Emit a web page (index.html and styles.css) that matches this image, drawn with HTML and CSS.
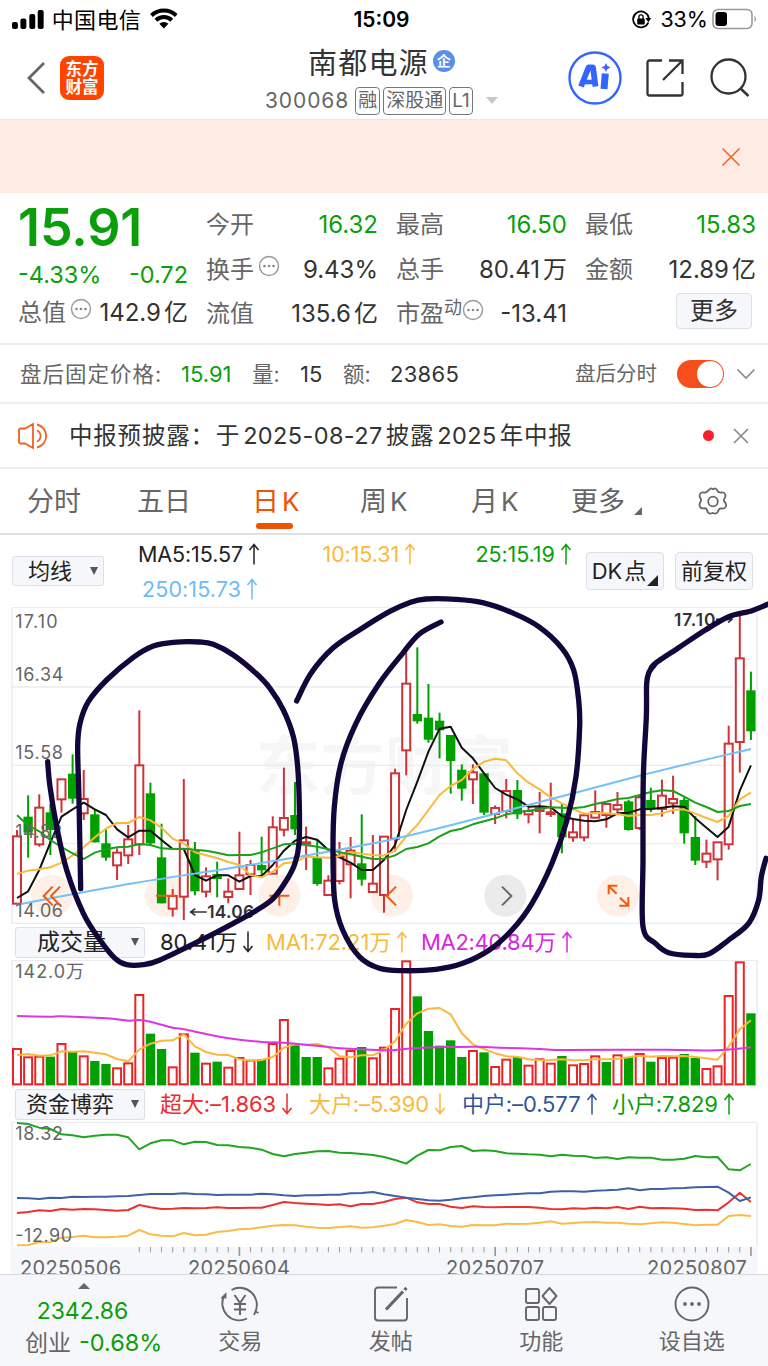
FILE: index.html
```html
<!DOCTYPE html>
<html lang="zh-CN">
<head>
    <meta charset="utf-8">
    <title>南都电源 300068</title>
    <link rel="stylesheet" href="styles.css">
</head>
<body>
    <svg class="defs">
        <symbol id="up" viewBox="0 0 12 22"><path d="M6 21.500V1.500M1.500 7L6 1.500l4.500 5.500" fill="none" stroke="currentColor" stroke-width="1.500"/></symbol>
        <symbol id="down" viewBox="0 0 12 22"><path d="M6 .5v20M1.500 15L6 20.500l4.500-5.500" fill="none" stroke="currentColor" stroke-width="1.500"/></symbol>
        <symbol id="dots" viewBox="0 0 22 22"><circle cx="11" cy="11" r="9.500" fill="none" stroke="#999" stroke-width="1.400"/><g fill="#888"><circle cx="6.500" cy="11" r="1.300"/><circle cx="11" cy="11" r="1.300"/><circle cx="15.500" cy="11" r="1.300"/></g></symbol>
    </svg>

    <div class="status">
        <svg class="signal" width="34" height="22" viewBox="0 0 34 22">
            <rect x="1" y="13" width="6" height="7" rx="2"/><rect x="9.500" y="9.500" width="6" height="10.500" rx="2"/><rect x="18.500" y="5" width="6" height="15" rx="2"/><rect x="27" y="1" width="6" height="19" rx="2"/>
        </svg>
        <span class="carrier">中国电信</span>
        <svg class="wifi" width="28" height="21" viewBox="0 0 28 21">
            <path d="M1.500 7.500a18 18 0 0 1 25 0M6 12.300a11.500 11.500 0 0 1 16 0" fill="none" stroke="#000" stroke-width="4"/>
            <path d="M14 20.500l-4.600-4.600a6.500 6.500 0 0 1 9.200 0z"/>
        </svg>
        <span class="time">15:09</span>
        <svg class="lock" width="22" height="20" viewBox="0 0 22 20">
            <path d="M17.500 12.500A8 8 0 1 1 18 8" fill="none" stroke="#000" stroke-width="1.800"/>
            <path d="M14.500 8h6l-3 4.200z"/><rect x="6.300" y="8.500" width="7.600" height="6" rx="1"/>
            <path d="M8 9V7a2.100 2.100 0 0 1 4.200 0v2" fill="none" stroke="#000" stroke-width="1.300"/>
        </svg>
        <span class="percent">33%</span>
        <svg class="battery" width="46" height="22" viewBox="0 0 46 22">
            <rect x="1" y="1.500" width="39" height="19" rx="5" fill="none" stroke="#999" stroke-width="1.600"/>
            <rect x="3.500" y="4" width="11.500" height="14" rx="3"/><path d="M42.500 7.500q3 3.500 0 7z" fill="#999"/>
        </svg>
    </div>

    <div class="header">
        <svg class="back" width="20" height="34" viewBox="0 0 20 34"><path d="M18 2L3 17l15 15" fill="none" stroke="#666" stroke-width="2.800"/></svg>
        <div class="logo">东方<br>财富</div>
        <div class="name">
            <div class="title">南都电源<i>企</i></div>
            <div class="code">300068<b>融</b><b>深股通</b><b>L1</b><em></em></div>
        </div>
        <svg class="ai" width="54" height="54" viewBox="0 0 54 54">
            <circle cx="27" cy="27" r="25.500" fill="none" stroke="#3366ff" stroke-width="2.400"/>
            <path d="M13 35.500L20.500 16.500h4.500L27.500 35.500" fill="none" stroke="#3366ff" stroke-width="5.800" stroke-linejoin="round"/>
            <path d="M15 31h12" stroke="#3366ff" stroke-width="4.600"/>
            <path d="M37.300 22.500L36 38" stroke="#3366ff" stroke-width="7"/><path d="M38 12l1.400 3 3.200 1.500-3.200 1.400-1.400 3-1.400-3-3.200-1.400 3.200-1.500z" fill="#3366ff"/>
        </svg>
        <svg class="share" width="40" height="40" viewBox="0 0 40 40">
            <path d="M17 2.500H4.500a2 2 0 0 0-2 2v31a2 2 0 0 0 2 2h31a2 2 0 0 0 2-2V24M24 2.500h13.500V16M37 3L18 22" fill="none" stroke="#333" stroke-width="2.300"/>
        </svg>
        <svg class="search" width="42" height="42" viewBox="0 0 42 42">
            <circle cx="19.500" cy="19.500" r="17" fill="none" stroke="#333" stroke-width="2.300"/><path d="M31 31l8.500 8" stroke="#333" stroke-width="2.500"/>
        </svg>
    </div>

    <div class="banner">
        <svg width="20" height="20" viewBox="0 0 20 20"><path d="M1.500 1.500l17 17M18.500 1.500l-17 17" stroke="#f0621e" stroke-width="1.500"/></svg>
    </div>

    <div class="quote">
        <div class="main">
            <div class="price">15.91</div>
            <div class="change"><span>-4.33%</span><span>-0.72</span></div>
            <div class="cell"><label>总值<svg><use href="#dots"/></svg></label><span>142.9<u>亿</u></span></div>
        </div>
        <div class="col">
            <div class="cell"><label>今开</label><span class="green">16.32</span></div>
            <div class="cell"><label>换手<svg><use href="#dots"/></svg></label><span>9.43%</span></div>
            <div class="cell"><label>流值</label><span>135.6<u>亿</u></span></div>
        </div>
        <div class="col">
            <div class="cell"><label>最高</label><span class="green">16.50</span></div>
            <div class="cell"><label>总手</label><span>80.41<u>万</u></span></div>
            <div class="cell"><label>市盈<small>动</small><svg><use href="#dots"/></svg></label><span>-13.41</span></div>
        </div>
        <div class="col">
            <div class="cell"><label>最低</label><span class="green">15.83</span></div>
            <div class="cell"><label>金额</label><span>12.89<u>亿</u></span></div>
            <div class="more">更多</div>
        </div>
    </div>

    <div class="after">
        <label class="l1">盘后固定价格:</label><span class="green v1">15.91</span>
        <label class="l2">量:</label><span class="v2">15</span>
        <label class="l3">额:</label><span class="v3">23865</span>
        <label class="l4">盘后分时</label>
        <div class="switch"></div>
        <svg width="20" height="12" viewBox="0 0 20 12"><path d="M1.500 1.500L10 10l8.500-8.500" fill="none" stroke="#888" stroke-width="1.600"/></svg>
    </div>

    <div class="notice">
        <svg width="34" height="28" viewBox="0 0 34 28">
            <path d="M2 8q0-1.500 1.500-1.500H8L16 2v24l-8-4.500H3.500Q2 21.500 2 20zM20 8.500a6 6 0 0 1 0 11M20 2.500a11.800 11.800 0 0 1 0 23" fill="none" stroke="#f0621e" stroke-width="1.800"/>
        </svg>
        <span class="text">中报预披露：<span>于</span><u>2025-08-27</u>披露<u>2025</u>年中报</span>
        <i></i>
        <svg class="x" width="16" height="16" viewBox="0 0 16 16"><path d="M1 1l14 14M15 1L1 15" stroke="#888" stroke-width="1.600"/></svg>
    </div>

    <div class="tabs">
        <span>分时</span>
        <span>五日</span>
        <span class="active">日<u>K</u></span>
        <span>周<u>K</u></span>
        <span>月<u>K</u></span>
        <span class="corner">更多</span>
        <svg width="32" height="32" viewBox="0 0 32 32">
            <path d="M12 4q1.500-2.400 3-1.300 1 .7 2 0 1.500-1.100 3 1.300l1.500 2q1 .8 3 .5 3-.3 3.800 2 .5 1.600-.5 3.500-1.800 2-.300 4l.4 0q1.800 2.300 1 4.500-1 2.400-4 2-2-.3-3 1l-1.200 2.500q-1.500 2.400-4 1.300-1-.6-2 0-2.500 1.100-4-1.300L9.500 23q-1-1-3-.7-3 .4-3.800-2-.7-2 .7-4.200 1.400-2-.200-4.200-1-2-.4-3.400.8-2.300 3.800-2 2 .3 3-.5z" fill="none" stroke="#666" stroke-width="1.800"/>
            <circle cx="16" cy="15.500" r="4.800" fill="none" stroke="#666" stroke-width="1.800"/>
        </svg>
    </div>

    <div class="ma">
        <div class="select s1">均线</div>
        <div class="list">
            <span class="black">MA5:15.57<svg><use href="#up"/></svg></span>
            <span class="yellow">10:15.31<svg><use href="#up"/></svg></span>
            <span class="green">25:15.19<svg><use href="#up"/></svg></span>
            <span class="blue">250:15.73<svg><use href="#up"/></svg></span>
        </div>
        <div class="btn dk">DK<u>点</u></div>
        <div class="btn">前复权</div>
    </div>

    <svg id="kline" class="kline" viewBox="0 21 2304 951">
        <text class="mark" x="768" y="566" textLength="770">东方财富</text>
        <g class="grid">
            <path d="M36 261H2199M36 496H2199M36 731H2199"/>
            <rect x="36" y="22" width="2163" height="948"/>
        </g>
        <g class="tool">
            <circle cx="156" cy="887" r="63"/><circle cx="497" cy="887" r="63"/><circle cx="838" cy="887" r="63"/>
            <circle cx="1176" cy="887" r="63"/><circle class="gray" cx="1516" cy="887" r="63"/><circle cx="1854" cy="887" r="63"/>
        </g>
        <g class="data"></g>
        <g class="scale">
            <text x="46" y="83" textLength="127">17.10</text>
            <text x="46" y="242" textLength="144">16.34</text>
            <text x="46" y="478" textLength="143">15.58</text>
            <text x="46" y="714" textLength="141">14.82</text>
            <text x="46" y="952" textLength="143">14.06</text>
        </g>
        <g class="tip">
            <path d="M572 936h48M586 926l-14 10 14 10M2148 58h48M2184 48l12 10-12 10"/>
            <text x="622" y="954" textLength="140">14.06</text>
            <text x="2022" y="77" textLength="124">17.10</text>
        </g>
        <g class="tool">
            <path d="M158 860l-27 28 27 28M180 860l-27 28 27 28M468 887h60M808 887h60M838 887v30M1188 860l-28 28 28 28"/>
            <path class="gray" d="M1506 860l28 28-28 28"/>
            <path d="M1850 881l-24-23M1826 883v-26h26M1860 893l24 23M1858 917h27v-26"/>
        </g>
    </svg>

    <div class="row">
        <div class="select s2">成交量</div>
        <span class="black v1">80.41万<svg><use href="#down"/></svg></span>
        <span class="yellow v2">MA1:72.21万<svg><use href="#up"/></svg></span>
        <span class="purple v3">MA2:40.84万<svg><use href="#up"/></svg></span>
    </div>

    <svg id="volume" class="volume" viewBox="0 90 2304 378">
        <rect class="frame" x="36" y="91" width="2235" height="374"/>
        <g class="scale"><text x="46" y="145" textLength="206">142.0万</text></g>
        <g class="data"></g>
    </svg>

    <div class="row">
        <div class="select s3">资金博弈</div>
        <span class="red f1">超大:–1.863<svg><use href="#down"/></svg></span>
        <span class="yellow f2">大户:–5.390<svg><use href="#down"/></svg></span>
        <span class="navy f3">中户:–0.577<svg><use href="#up"/></svg></span>
        <span class="green f4">小户:7.829<svg><use href="#up"/></svg></span>
    </div>

    <svg id="flow" class="flow" viewBox="0 36 2304 375">
        <path class="frame" d="M36 408V37H2271V408"/>
        <g class="data"></g>
        <g class="scale">
            <text x="46" y="90" textLength="143">18.32</text>
            <text x="46" y="396" textLength="170">-12.90</text>
        </g>
    </svg>

    <div class="dates">
        <svg id="ticks" viewBox="0 411 2304 84"></svg>
        <span>20250506</span><span>20250604</span><span>20250707</span><span>20250807</span>
    </div>

    <div class="footer">
        <div class="index">
            <em></em>
            <div class="green">2342.86</div>
            <div>创业<span class="green">-0.68%</span></div>
        </div>
        <div class="item">
            <svg width="42" height="38" viewBox="0 0 42 38">
                <path d="M12.500 5A17 17 0 0 1 36 27.500M28 33.500A17 17 0 0 1 5.500 10M2.500 13.500l4-4v4M35 30l1.500-3.500 3 1.500" fill="none" stroke="#666" stroke-width="1.900"/>
                <path d="M15.500 10l5.500 8 5.500-8M21 18v12M15 19h12M15 24.500h12" fill="none" stroke="#666" stroke-width="2"/>
            </svg>
            交易
        </div>
        <div class="item">
            <svg width="38" height="38" viewBox="0 0 38 38">
                <path d="M25 2.500H6a3 3 0 0 0-3 3v27a3 3 0 0 0 3 3h26a3 3 0 0 0 3-3V13" fill="none" stroke="#666" stroke-width="1.900"/>
                <path d="M14 24.500L31 6.500M32.500 5l2-2.200" stroke="#666" stroke-width="3.200"/>
            </svg>
            发帖
        </div>
        <div class="item">
            <svg width="36" height="38" viewBox="0 0 36 38" fill="none" stroke="#666" stroke-width="1.900">
                <rect x="3" y="4" width="13" height="14" rx="2"/><rect x="3" y="22" width="13" height="13" rx="2"/><rect x="20" y="22" width="13" height="13" rx="2"/><path d="M26.500 3l7 8-7 8-7-8z" stroke-linejoin="round"/>
            </svg>
            功能
        </div>
        <div class="item">
            <svg width="38" height="38" viewBox="0 0 38 38"><circle cx="19" cy="19" r="16.500" fill="none" stroke="#666" stroke-width="1.900"/><g fill="#666"><circle cx="12" cy="19" r="1.900"/><circle cx="19" cy="19" r="1.900"/><circle cx="26" cy="19" r="1.900"/></g></svg>
            设自选
        </div>
    </div>

    <svg id="pen" class="pen" viewBox="0 0 2304 1140"></svg>

    <script src="script.js"></script>
</body>
</html>
```
FILE: styles.css
```css
body {
    margin: 0;
    width: 768px;
    height: 1366px;
    overflow: hidden;
    position: relative;
    background: #fff;
    color: #333;
    font-family: Inter, "Noto Sans CJK SC", sans-serif;
    font-size: 23px;
}

u, i, em, b {
    text-decoration: none;
    font-style: normal;
    font-weight: 400;
}

.defs { display: none; }

.green { color: #0a9f0a; }
.yellow { color: #f9b93c; }
.blue { color: #6bbcf7; }
.purple { color: #d926e0; }
.black { color: #222; }
.red { color: #ee2a2a; }
.navy { color: #2f5597; }

/* status bar */
.status {
    display: flex;
    align-items: center;
    height: 40px;
    box-sizing: border-box;
    padding: 0 10px 0 11px;
    color: #000;
    font-size: 21px;
}

.signal { margin-top: -1px; }
.carrier { margin: -4px 0 0 7px; width: 91px; font-size: 22px; letter-spacing: 0.4px; }
.wifi { margin: -3px 0 0 8px; }
.time { margin: -1px 0 0 176px; width: 62px; font-weight: 600; }
.lock { margin-left: 216px; }
.percent { margin: -2px 0 0 8px; width: 48px; font-size: 21.5px; letter-spacing: -0.2px; }
.battery { margin-left: 4px; margin-top: -2px; flex: none; }

/* header */
.header {
    display: flex;
    align-items: center;
    height: 80px;
    box-sizing: border-box;
    padding: 0 16px 3px 26px;
    border-bottom: 1px solid #e6e6e6;
}

.logo {
    width: 44px;
    height: 44px;
    margin-left: 14px;
    border-radius: 9px;
    box-sizing: border-box;
    padding-top: 4px;
    background: #ff4400;
    color: #fff;
    font-size: 16.500px;
    font-weight: 700;
    line-height: 18px;
    text-align: center;
}

.name { width: 240px; margin-left: 161px; }

.title {
    display: flex;
    align-items: center;
    height: 38px;
    margin: 1px 0 0 43px;
    font-size: 29px;
    letter-spacing: 1.2px;
}

.title i {
    width: 22px;
    height: 22px;
    margin-left: 4px;
    border-radius: 50%;
    background: #5b8def;
    color: #fff;
    font-size: 14px;
    font-weight: 700;
    line-height: 21px;
    letter-spacing: 0;
    text-align: center;
}

.code {
    display: flex;
    align-items: center;
    gap: 3px;
    margin-top: 6px;
    height: 30px;
    color: #666;
    font-size: 21px;
    letter-spacing: 0.9px;
}

.code b {
    border: 1px solid #777;
    border-radius: 4px;
    padding: 0 2px;
    height: 26px;
    line-height: 26px;
    font-size: 19px;
    letter-spacing: 0;
    white-space: nowrap;
}

.code b:first-of-type { margin-left: 3px; }

.code em {
    margin-left: 10px;
    border: 6px solid transparent;
    border-top: 7px solid #c8c8c8;
    border-bottom: 0;
}

.ai { margin-left: 63px; }
.share { margin-left: 23px; }
.search { margin-left: 24px; }

.banner {
    display: flex;
    justify-content: flex-end;
    align-items: center;
    height: 73px;
    padding-right: 27px;
    background: #fdebe4;
}

/* quote */
.quote {
    display: grid;
    grid-template-columns: 170px 172px 171px 171px;
    column-gap: 18px;
    height: 152px;
    box-sizing: border-box;
    padding: 10px 12px 0 18px;
    border-bottom: 2px solid #eee;
}

.price {
    height: 49px;
    line-height: 49px;
    color: #0a9f0a;
    font-size: 52px;
    font-weight: 600;
    letter-spacing: -0.1px;
}

.change {
    display: flex;
    justify-content: space-between;
    height: 39px;
    line-height: 46px;
    color: #0a9f0a;
    font-size: 23.5px;
}

.cell {
    display: flex;
    justify-content: space-between;
    height: 44.500px;
    line-height: 44px;
    font-size: 24px;
    white-space: nowrap;
}

.cell label { color: #666; }
.cell label svg { width: 22px; height: 22px; margin: -8px 0 -4px 4px; vertical-align: 1px; position: relative; top: -4px; }
.cell small { font-size: 18px; line-height: 0; vertical-align: 8px; }
.cell small + svg { margin-left: 0; }
.cell u { margin-left: 3px; }

.more {
    width: 74px;
    height: 34px;
    margin: 1px 4px 0 auto;
    border: 1px solid #dcdfe6;
    border-radius: 4px;
    background: #f5f7fb;
    line-height: 34px;
    text-align: center;
    font-size: 24px;
}

/* after hours */
.after {
    display: flex;
    align-items: center;
    height: 59px;
    box-sizing: border-box;
    padding-left: 20px;
    border-bottom: 2px solid #eee;
    font-size: 22px;
    white-space: nowrap;
}

.after label { margin-top: -3px; color: #666; }
.l1 { width: 161px; font-size: 21.5px; letter-spacing: 1px; }
.v1 { width: 71px; }
.l2 { width: 48px; font-size: 21.5px; }
.v2 { width: 43px; }
.l3 { width: 47px; font-size: 21.5px; }
.v3 { width: 185px; letter-spacing: 0.3px; }
.l4 { width: 102px; font-size: 20.500px; }

.switch {
    width: 47px;
    height: 28px;
    border-radius: 14px;
    background: #f5501c;
    margin-right: 12px;
}

.switch::after {
    content: "";
    display: block;
    width: 26px;
    height: 26px;
    margin: 1px 0 0 20px;
    border-radius: 50%;
    background: #fff;
}

/* notice */
.notice {
    display: flex;
    align-items: center;
    height: 65px;
    box-sizing: border-box;
    padding-left: 17px;
    border-bottom: 2px solid #eee;
    font-size: 23.5px;
}

.notice .text { width: 634px; margin: -4px 0 0 18px; letter-spacing: 0.8px; white-space: nowrap; }
.notice .text span { margin-left: 1px; }
.notice u { margin: 0 3px; letter-spacing: 0.4px; }
.notice i { width: 11px; height: 11px; border-radius: 50%; background: #f5222d; }
.notice .x { margin-left: 19px; }

/* tabs */
.tabs {
    display: flex;
    height: 66px;
    box-sizing: border-box;
    border-bottom: 2px solid #e0e0e8;
    padding-left: 27px;
    color: #666;
    font-size: 27px;
    line-height: 65px;
}

.tabs span { width: 110px; flex: none; white-space: nowrap; }
.tabs span:nth-child(2) { width: 115px; }
.tabs span:nth-child(3) { width: 108px; }
.tabs span:nth-child(4) { width: 111px; }
.tabs span:nth-child(5) { width: 100px; }
.tabs span:nth-child(6) { width: 126px; }
.tabs u { margin-left: 3px; font-size: 26px; }
.tabs .active { color: #ea5504; position: relative; }

.tabs .active::after {
    content: "";
    position: absolute;
    left: 4px;
    top: 54px;
    width: 37px;
    height: 6px;
    border-radius: 3px;
    background: #ea5504;
}

.corner::after {
    content: "";
    display: inline-block;
    margin-left: 9px;
    border-left: 8px solid transparent;
    border-bottom: 8px solid #666;
    vertical-align: -4px;
}

.tabs svg { margin-top: 17px; }

/* average lines */
.ma {
    display: flex;
    height: 72px;
    padding-left: 12px;
}

.select {
    position: relative;
    box-sizing: border-box;
    border: 1px solid #dcdfe6;
    border-radius: 3px;
    background: #f6f7fa;
    color: #222;
    font-size: 22px;
    white-space: nowrap;
}

.select::after {
    content: "";
    position: absolute;
    right: 5px;
    top: 10px;
    border: 4.500px solid transparent;
    border-top: 8px solid #555;
    border-bottom: 0;
}

.s1 { width: 92px; height: 30px; margin-top: 21px; padding-left: 15px; line-height: 28px; }

.list {
    display: grid;
    grid-template-columns: 184.500px 153px 105px;
    grid-template-rows: 35px 35px;
    width: 442px;
    margin-left: 34px;
    padding-top: 2px;
    line-height: 35px;
    font-size: 21.5px;
    letter-spacing: -0.1px;
    white-space: nowrap;
}

.list svg, .row span svg { width: 12px; height: 22px; margin-left: 5px; vertical-align: -3px; }
.list .blue { padding-left: 4px; letter-spacing: 0.1px; }

.btn {
    box-sizing: border-box;
    width: 78px;
    height: 38px;
    margin: 17px 0 0 11px;
    border: 1px solid #dcdfe6;
    border-radius: 4px;
    background: #f6f7fa;
    color: #222;
    font-size: 22px;
    line-height: 36px;
    text-align: center;
    white-space: nowrap;
}

.dk { position: relative; margin-left: 6px; padding-right: 12px; }
.dk u { margin-left: 2px; }

.dk::after {
    content: "";
    position: absolute;
    right: 5px;
    bottom: 3px;
    border-left: 11px solid transparent;
    border-bottom: 11px solid #222;
}

/* charts */
.kline, .volume, .flow { display: block; width: 768px; }
.kline { height: 317px; }
.volume { height: 126px; }
.flow { height: 125px; overflow: visible; }

.grid, .frame { fill: none; stroke: #ebebf0; stroke-width: 4; }
.grid rect { width: 2235px; }
.mark { fill: #f6f6f7; font-size: 192px; font-weight: 700; }
.scale { fill: #666; font-size: 54px; }
.tip { fill: #333; font-size: 52px; font-weight: 600; }
.tip path { fill: none; stroke: #333; stroke-width: 5; }

.tool circle { fill: #f6813a; fill-opacity: 0.12; }
.tool path { fill: none; stroke: #ee5a10; stroke-width: 6; }
.tool circle.gray { fill: #000; fill-opacity: 0.08; }
.tool path.gray { stroke: #666; }

.line { fill: none; stroke-width: 6; stroke-linejoin: round; }

.row {
    display: flex;
    height: 36px;
    padding-left: 15px;
    line-height: 37px;
    font-size: 22px;
    letter-spacing: -0.1px;
    white-space: nowrap;
}

.row .select { width: 130px; height: 31px; margin-top: 3px; line-height: 29px; letter-spacing: 0; }
.row .v1 { width: 106px; margin-left: 15px; }
.row .v2 { width: 155px; }
.row .v3 { letter-spacing: -0.3px; }
.s2 { padding-left: 21px; font-size: 23px; }
.s3 { padding-left: 10px; }
.row .f1 { width: 149px; margin-left: 15px; }
.row .f2 { width: 153px; }
.row .f3 { width: 150px; }

.dates {
    position: relative;
    display: flex;
    height: 27px;
    overflow: hidden;
    margin: 0 11px;
    background: #f6f7fa;
    color: #666;
    font-size: 20px;
    letter-spacing: 0.3px;
    line-height: 24px;
    padding-top: 9px;
    box-sizing: border-box;
}

.dates svg {
    position: absolute;
    left: -11px;
    top: 0;
    width: 768px;
    height: 28px;
}

.dates span { margin-left: 9px; width: 168px; flex: none; }
.dates span:nth-of-type(2) { margin-left: 0; width: 258px; }
.dates span:nth-of-type(3) { margin-left: 0; width: 201px; }
.dates span:nth-of-type(4) { margin-left: 0; width: 110px; }

/* footer */
.footer {
    display: flex;
    height: 92px;
    box-sizing: border-box;
    border-top: 1px solid #d5d8df;
    background: #f6f7fa;
    color: #666;
}

.index {
    width: 165px;
    text-align: center;
    font-size: 23px;
    line-height: 32px;
    box-sizing: border-box;
}

.index em {
    display: block;
    width: 0;
    margin: 8px auto 6px 78px;
    border: 6px solid transparent;
    border-bottom: 6px solid #666;
    border-top: 0;
}

.index div + div { margin-left: 25px; white-space: nowrap; text-align: left; }
.index span { margin-left: 8px; font-size: 23.5px; }

.item {
    width: 150.500px;
    display: flex;
    flex-direction: column;
    align-items: center;
    padding-top: 10px;
    box-sizing: border-box;
    font-size: 22px;
    line-height: 36px;
}

.pen {
    position: absolute;
    left: 0;
    top: 600px;
    width: 768px;
    height: 380px;
    overflow: visible;
}

.pen path {
    fill: none;
    stroke: #12063a;
    stroke-width: 16;
    stroke-linecap: round;
    stroke-linejoin: round;
}
```
FILE: script.js
```js
var RED = '#cf3238', GREEN = '#00a000';
var STEP = 33.36;

// r/g, high, body top, body bottom, low
var candles = [
    'r',690,709,911,911, 'g',586,650,698,773, 'r',583,623,733,740, 'g',612,637,690,765,
    'r',538,538,598,638, 'g',463,521,596,611, 'r',510,597,640,660, 'g',628,643,727,727,
    'g',687,730,773,782, 'r',745,758,796,840, 'r',675,718,766,792, 'r',331,496,733,765,
    'g',548,580,730,735, 'g',671,772,910,910, 'r',867,888,926,950, 'r',537,721,890,960,
    'g',726,753,874,886, 'r',802,829,875,892, 'g',785,822,837,892, 'r',835,875,891,910,
    'r',695,826,867,867, 'r',780,795,823,885, 'g',710,795,811,825, 'r',649,682,821,821,
    'r',503,654,689,709, 'g',546,645,688,705, 'r',680,727,731,810, 'g',720,774,852,857,
    'r',826,842,885,885, 'r',726,770,843,853, 'r',711,752,793,895, 'g',643,790,839,857,
    'r',705,851,876,876, 'r',710,710,885,938, 'r',506,520,716,755, 'r',155,251,451,526,
    'g',142,342,364,371, 'g',252,353,419,428, 'g',338,362,391,475, 'g',405,405,483,581,
    'g',493,509,566,602, 'r',493,517,538,612, 'g',520,520,638,645, 'r',616,624,642,672,
    'r',537,573,633,655, 'g',540,570,643,657, 'r',620,633,643,670, 'r',576,625,633,700,
    'r',548,637,642,651, 'g',610,640,712,760, 'r',655,697,712,725, 'r',640,646,712,724,
    'r',571,636,653,655, 'r',612,612,645,683, 'r',576,615,628,640, 'g',600,604,690,692,
    'r',588,592,684,690, 'g',563,600,628,636, 'r',539,587,627,650, 'r',527,597,610,642,
    'g',592,600,700,731, 'g',648,711,782,795, 'r',719,761,785,804, 'r',727,727,778,841,
    'r',377,431,733,749, 'r',33,175,426,518, 'g',215,271,394,420
];

var ma5 = [894,874,810,728,650,628,608,628,645,688,712,692,692,720,747,747,825,842,826,826,845,828,828,795,752,722,711,719,750,772,788,810,810,780,735,630,545,455,386,380,443,475,520,564,584,598,620,619,622,648,657,662,664,658,640,638,628,627,623,619,620,655,683,711,680,572,496];
var ma10 = [822,812,808,802,788,766,742,712,686,669,669,651,661,683,716,731,757,766,774,786,795,825,832,815,790,786,770,772,773,768,756,761,765,767,752,709,675,630,585,558,540,507,485,476,481,520,548,568,592,610,627,641,639,640,642,648,645,645,640,630,628,641,654,666,648,598,577];
var ma25 = [646,676,694,720,741,760,777,758,748,742,740,732,735,745,747,746,749,752,758,766,765,765,757,745,733,731,735,740,748,757,763,770,777,776,766,747,741,730,709,693,686,673,664,655,643,637,632,627,622,623,625,621,612,605,597,594,585,576,571,573,590,608,621,636,633,618,612];

var volumes = [355,380,378,380,340,363,377,393,402,413,398,193,311,357,410,311,368,399,395,411,382,390,388,340,268,343,381,381,413,384,361,351,383,351,235,92,199,303,347,331,381,361,367,409,387,381,405,386,399,378,404,400,377,396,374,381,370,395,382,381,372,384,415,407,196,95,250];
// days whose volume bar has the other colour than the candle
var volumeRed = [1];
var volumeGreen = [26, 53];
var vma1 = [375,372,377,376,364,365,364,368,373,387,394,359,341,332,331,313,349,366,374,375,388,392,390,381,353,343,344,342,352,379,382,376,376,360,334,281,250,236,234,253,310,343,357,370,379,380,388,391,390,388,391,390,388,388,386,382,377,380,378,379,378,381,385,389,350,298,271];

var small = [39,42,53,57,73,76,82,77,74,74,82,118,100,91,91,103,95,96,105,106,111,113,119,132,139,132,128,124,123,128,129,132,135,141,150,161,137,120,121,111,108,123,121,123,130,131,133,134,139,134,137,138,144,142,147,142,143,143,149,149,146,138,142,141,178,181,162];
var middle = [264,265,267,263,264,260,261,260,260,259,258,255,252,252,252,250,252,253,255,254,254,254,251,253,256,258,256,256,254,254,250,249,246,253,258,263,267,271,272,269,265,262,258,256,254,252,250,250,245,244,244,245,242,241,239,235,241,237,237,235,234,232,231,230,248,273,262];
var huge = [309,306,301,303,297,299,297,298,300,302,300,285,292,297,296,294,295,294,292,294,294,293,293,285,276,279,281,283,285,283,289,282,282,276,267,263,277,282,282,290,294,289,291,292,291,291,291,293,297,298,295,296,293,295,291,297,290,295,294,295,296,300,299,301,277,248,276];
var large = [406,405,397,396,383,381,377,382,382,380,377,360,373,377,379,369,376,374,366,363,358,356,352,347,345,346,350,353,354,351,349,353,352,347,342,330,336,345,343,348,350,345,346,346,341,342,341,338,334,341,339,337,336,338,338,341,343,340,337,338,342,346,344,344,318,315,318];

function cx(i) {
    return 51 + i * STEP;
}

function rect(i, top, bottom, color, isRed) {
    var x = cx(i) - (isRed ? 12 : 14);
    var w = isRed ? 24 : 28;
    return '<rect x="' + x + '" y="' + top + '" width="' + w + '" height="' + (bottom - top) +
        '" fill="' + (isRed ? '#fff' : color) + '"' + (isRed ? ' stroke="' + color + '" stroke-width="6"' : '') + '/>';
}

function line(values, color) {
    var pts = values.map(function (v, i) { return cx(i) + ',' + v; }).join(' ');
    return '<polyline class="line" stroke="' + color + '" points="' + pts + '"/>';
}

// curve through all points
function smooth(p) {
    var d = 'M' + p[0] + ' ' + p[1];
    for (var i = 0; i < p.length - 2; i += 2) {
        var a = Math.max(i - 2, 0), c = i + 2, e = Math.min(i + 4, p.length - 2);
        d += 'C' + (p[i] + (p[c] - p[a]) / 6) + ' ' + (p[i + 1] + (p[c + 1] - p[a + 1]) / 6) + ' ' +
            (p[c] - (p[e] - p[i]) / 6) + ' ' + (p[c + 1] - (p[e + 1] - p[i + 1]) / 6) + ' ' + p[c] + ' ' + p[c + 1];
    }
    return d;
}

function drawKline() {
    var html = '';
    for (var i = 0; i < candles.length / 5; i++) {
        var c = candles.slice(i * 5, i * 5 + 5);
        var color = c[0] == 'r' ? RED : GREEN;
        html += '<path d="M' + cx(i) + ' ' + c[1] + 'V' + c[4] + '" stroke="' + color + '" stroke-width="6"/>';
        html += rect(i, c[2], c[3], color, c[0] == 'r');
    }
    html += line(ma5, '#111') + line(ma10, '#fbb83c') + line(ma25, '#1aa01a');
    html += '<path class="line" stroke="#74c0f8" d="' + smooth([51,914,400,850,768,792,1168,720,1536,628,1936,523,2253,447]) + '"/>';
    document.querySelector('#kline .data').innerHTML = html;
}

function drawVolume() {
    var html = '';
    volumes.forEach(function (v, i) {
        var isRed = candles[i * 5] == 'r';
        if (volumeRed.indexOf(i) >= 0) isRed = true;
        if (volumeGreen.indexOf(i) >= 0) isRed = false;
        html += rect(i, isRed ? v + 2 : v, isRed ? 463 : 466, isRed ? '#ea2327' : GREEN, isRed);
    });
    html += line(vma1, '#fbb83c');
    html += '<path class="line" stroke="#dc35e2" d="' + smooth([51,258,150,260,184,259,318,265,385,272,418,270,451,275,518,293,551,298,618,312,680,324,785,336,851,338,960,348,1020,355,1152,361,1185,360,1252,354,1350,351,1430,350,1500,353,1620,357,1700,360,2000,359,2150,361,2253,352]) + '"/>';
    document.querySelector('#volume .data').innerHTML = html;
}

function drawFlow() {
    document.querySelector('#flow .data').innerHTML =
        line(small, '#22a522') + line(large, '#fbbc45') + line(huge, '#ee3030') + line(middle, '#3c62a5');
    var html = '';
    for (var i = 11; i < 67; i++) {
        var big = i == 20 || i == 43 || i == 66;
        html += '<path d="M' + cx(i) + ' 409V' + (big ? 438 : 427) + '" stroke="#999" stroke-width="' + (big ? 5 : 3) + '"/>';
    }
    document.getElementById('ticks').innerHTML = html;
}

function drawPen() {
    var strokes = [
        [143,485,150,560,170,680,200,810,250,940,300,1020,345,1075,380,1094,430,1094,480,1080,600,1022,700,970,768,932,820,895,860,840,885,790,897,730,898,620,893,500,880,410,850,330,810,265,768,220,700,165,640,133,600,126,520,127,460,138,400,172,320,240,265,305,240,370,233,440,237,600,242,866],
        [890,303,933,220,998,145,1078,90,1168,35,1228,8,1278,-3,1368,-2,1448,8,1536,38,1616,80,1686,145,1721,210,1736,300,1739,380,1728,530,1701,660,1656,790,1596,910,1536,990,1468,1050,1388,1090,1308,1108,1208,1112,1138,1105,1078,1070,1028,990,1004,900,999,760,1003,620,1023,490,1068,370,1138,250,1208,160,1258,102,1323,66],
        [2310,10,2256,32,2186,50,2116,90,2036,143,1966,190,1951,210,1965,192,1948,215,1940,250,1939,350,1930,530,1929,780,1929,980,1966,1030,2006,1058,2076,1066,2126,1062,2186,1020,2246,970,2276,900,2284,830,2298,775]
    ];
    document.getElementById('pen').innerHTML = strokes.map(function (s) {
        return '<path d="' + smooth(s) + '"/>';
    }).join('');
}

drawKline();
drawVolume();
drawFlow();
drawPen();
```
